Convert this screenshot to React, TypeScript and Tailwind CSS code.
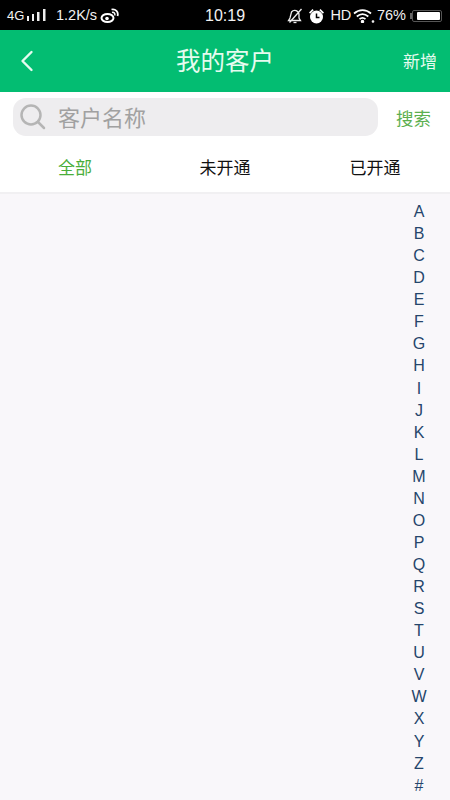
import { ChevronLeft } from "lucide-react";

const font = "font-['Liberation_Sans','Noto_Sans_CJK_SC',sans-serif]";
const letters = "ABCDEFGHIJKLMNOPQRSTUVWXYZ#".split("");

const StatusBar = () => (
  <div className="h-[30px] bg-black text-[#f2f2f2] flex items-center pl-[7px] pr-[8px] pt-[1px] relative text-[14.5px]">
    <span className="text-[13px] w-[17px]">4G</span>
    <svg width="19" height="13" viewBox="0 0 19 13" className="ml-[3px]" fill="#eee">
      <rect x="0" y="7" width="2" height="5" />
      <rect x="5" y="5" width="2" height="7" />
      <rect x="10" y="3" width="2.500" height="9" />
      <rect x="16" y="0" width="2.500" height="12" />
    </svg>
    <span className="ml-[10px]">1.2K/s</span>
    <svg width="19" height="15" viewBox="0 0 19 15" className="ml-[3px]" fill="none" stroke="#fff">
      <ellipse cx="7.500" cy="10" rx="6" ry="4" strokeWidth="2" />
      <circle cx="7" cy="10.500" r="1.800" fill="#fff" stroke="none" />
      <path d="M11.500 1.500a5 5 0 0 1 6 6.500" strokeWidth="1.800" />
      <path d="M12 4.500a2.200 2.200 0 0 1 2.700 3" strokeWidth="1.500" />
    </svg>
    <span className="absolute left-[205px] text-[16px]">10:19</span>
    <div className="ml-auto flex items-center">
      <svg width="16" height="16" viewBox="0 0 16 16" fill="none" stroke="#eee" strokeWidth="1.300">
        <path d="M1.500 12.500h12l-1.500-2.500V6.500a4.200 4.200 0 0 0-7.500-2.500L3 10z" />
        <path d="M6.500 14.500h3" />
        <path d="M2.500 14.500 14.500 1" />
      </svg>
      <svg width="17" height="16" viewBox="0 0 17 16" className="ml-[5px]" fill="#fff">
        <circle cx="8.500" cy="9" r="6.500" />
        <path d="M1 4.500l3.500-3.500 1.200 1.200-3.500 3.500zM16 4.500l-3.500-3.500-1.200 1.200 3.500 3.500z" />
        <path d="M8.500 5.500V9.500h3" stroke="#000" strokeWidth="1.500" fill="none" />
      </svg>
      <span className="ml-[5px] tracking-[-0.2px]">HD</span>
      <svg width="22" height="14" viewBox="0 0 22 14" className="ml-[2px]" fill="none" stroke="#fff" strokeWidth="1.700">
        <path d="M1 4.500c5-4.500 12-4.500 17 0" />
        <path d="M3.800 7.500c3.500-3 8-3 11.500 0" />
        <path d="M6.500 10.200c2-1.700 4-1.700 6 0" />
        <circle cx="9.500" cy="12.500" r="0.900" fill="#fff" />
        <circle cx="20" cy="12.500" r="0.500" fill="#fff" />
      </svg>
      <span className="ml-[2px]">76%</span>
      <div className="ml-[4px] w-[2px] h-[6px] bg-[#666]" />
      <div className="w-[30px] h-[12px] rounded-[2px] border border-[#555] flex justify-end p-px">
        <div className="w-[23px] bg-white rounded-[1px]" />
      </div>
    </div>
  </div>
);

const App = () => {
  return (
    <div className={`w-[450px] h-[800px] overflow-hidden flex flex-col bg-[#f9f7fa] ${font}`}>
      <StatusBar />
      <div className="h-[62px] bg-[#03bd72] text-[#e6fbef] flex items-center justify-between pl-[9px] pr-[13px] relative">
        <ChevronLeft size={36} strokeWidth={1.6} />
        <span className="absolute left-0 right-0 text-center text-[24.500px] pt-[3px]">我的客户</span>
        <span className="text-[17px] pt-[3px]">新增</span>
      </div>
      <div className="bg-white h-[54px] flex items-start pt-[6px] pl-[13px] pr-[19px]">
        <div className="w-[365px] h-[38px] rounded-[13px] bg-[#eeedef] flex items-center pl-[7px]">
          <svg width="26" height="28" viewBox="0 0 26 28" fill="none" stroke="#b5b5b5" strokeWidth="2.500">
            <circle cx="11" cy="12" r="9.500" />
            <path d="M18 19l6 6" strokeLinecap="round" />
          </svg>
          <span className="ml-[12px] text-[22px] text-[#a1a1a1] pt-[2px]">客户名称</span>
        </div>
        <span className="ml-auto mt-[8px] text-[17.500px] text-[#5caf4f]">搜索</span>
      </div>
      <div className="bg-white h-[48px] border-b-[2px] border-[#f1f0f2] grid grid-cols-3 text-[17px] text-[#111] items-center text-center">
        <span className="text-[#4aae3a]">全部</span>
        <span>未开通</span>
        <span>已开通</span>
      </div>
      <div className="flex-1 flex flex-col items-end pr-[21px] pt-[7px]">
        {letters.map((l) => (
          <span key={l} className="h-[22.07px] w-[20px] text-center text-[16px] leading-[22px] text-[#25456b]">
            {l}
          </span>
        ))}
      </div>
    </div>
  );
};

export default App;
